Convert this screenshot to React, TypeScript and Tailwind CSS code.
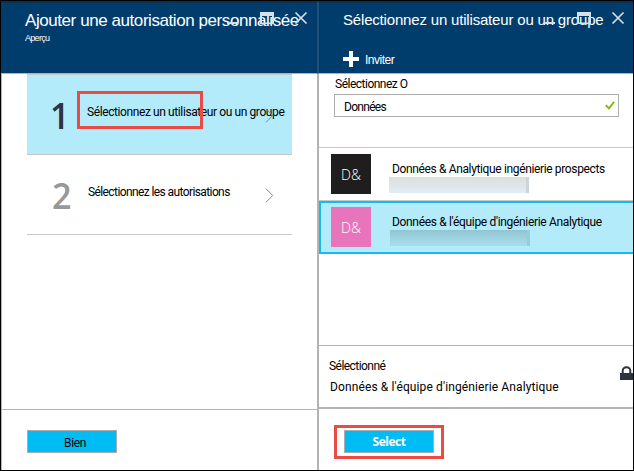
import type { ReactNode } from "react";

function WindowControls({ className }: { className: string }) {
  return (
    <svg className={className} width="83" height="18" viewBox="0 0 83 18" fill="none">
      <path d="M2 14H13" stroke="#d5e0e8" strokeWidth="2" />
      <path d="M35 3H49V15H35Z M37 7V13.5H47V7Z" fill="#d5e0e8" fillRule="evenodd" />
      <path d="M70.500 3.500L81.500 14.500M81.500 3.500L70.500 14.500" stroke="#d5e0e8" strokeWidth="1.7" />
    </svg>
  );
}

function Chevron() {
  return (
    <svg className="mt-[33px] h-[15px] w-[9px] shrink-0" viewBox="0 0 9 15" fill="none">
      <path d="M1 .7L7.700 7.500L1 14.300" stroke="#7d8991" strokeWidth="1" />
    </svg>
  );
}

function Step({ number, active, children }: { number: string; active?: boolean; children: ReactNode }) {
  return (
    <div
      className={`flex w-[265px] border-b border-[#c8c8c8] pl-[25px] ${
        active ? "h-[81px] border-t bg-[#b3ebfb] text-[#2f333b]" : "h-[80px] text-[#96999c]"
      }`}
    >
      <div className={`w-[35px] shrink-0 pt-[16px] font-['Open_Sans',sans-serif] text-[36px] leading-[49px] font-semibold ${active ? "-ml-[2px] mr-[2px]" : ""}`}>
        <span className="inline-block origin-left scale-x-95">{number}</span>
      </div>
      <div className="w-[178px] shrink-0 pt-[29px] leading-4 whitespace-nowrap text-black">{children}</div>
      <Chevron />
    </div>
  );
}

function Group({ name, color, selected, children }: { name: string; color: string; selected?: boolean; children: ReactNode }) {
  return (
    <div className={`flex ${selected ? "h-[53px] border-2 border-r-0 border-[#12bcef] bg-[#b3ebfb] pt-1 pl-[10px]" : "h-[52px] pt-[6px] pl-3"}`}>
      <div
        className={`h-10 w-10 shrink-0 text-center font-['Open_Sans',sans-serif] text-[14px] leading-[42px] font-light text-white ${color}`}
      >
        D&amp;
      </div>
      <div className="ml-[18px]">
        <div className={`h-[23px] pl-[3px] leading-[31px] whitespace-nowrap ${name}`}>{children}</div>
        <div
          className={`h-4 w-[140px] border-r-[3px] ${
            selected
              ? "ml-px border-[#94cedb] bg-linear-to-b from-[#91c5d3] to-[#a9deed]"
              : "border-[#cbd5d8] bg-linear-to-b from-[#dedede] to-[#dfedf4]"
          }`}
        />
      </div>
    </div>
  );
}

export default function App() {
  return (
    <div className="flex h-[471px] w-[634px] overflow-hidden border border-black bg-white font-[Roboto,sans-serif] text-[12px] text-black">
      <section className="flex w-[316px] shrink-0 flex-col">
        <header className="relative h-[73px] shrink-0 border-t-2 border-b border-t-[#073354] border-b-[#a8b5be] bg-[#003d6d] pl-6 font-['Liberation_Sans',sans-serif] text-white">
          <h1 className="pt-[8px] text-[17px] leading-5 tracking-[-0.43px] whitespace-nowrap">Ajouter une autorisation personnalisée</h1>
          <p className="pt-[2px] text-[9px] leading-[10px] tracking-[-0.7px]">Aperçu</p>
          <WindowControls className="absolute top-[6px] left-[224px]" />
        </header>
        <div className="relative h-[335px] shrink-0 border-l border-[#b4b4b4] pl-[25px]">
          <Step number="1" active>
            <span className="tracking-[-0.4px]">Sélectionnez un utilisateur ou un groupe</span>
          </Step>
          <Step number="2">
            <span className="pl-px tracking-[-0.6px]">Sélectionnez les autorisations</span>
          </Step>
          <div className="absolute top-[17px] left-[75px] h-[38px] w-[126px] border-[3px] border-[#eb4b45]" />
        </div>
        <footer className="flex-1 border-t border-l border-[#b4b4b4] pt-[20px] pl-[25px]">
          <button className="block h-[23px] w-[90px] border border-[#a9adaf] bg-[#00bcf5] pt-[2px] pl-[6px] text-center text-[12px] tracking-[-0.4px]">Bien</button>
        </footer>
      </section>

      <section className="flex w-[316px] shrink-0 flex-col">
        <header className="relative h-[73px] shrink-0 border-t-2 border-b border-l-2 border-t-[#073354] border-b-[#a8b5be] border-l-[#1c507a] bg-[#003d6d] pl-6 font-['Liberation_Sans',sans-serif] text-white">
          <h1 className="pt-[7px] text-[15px] leading-5 tracking-[-0.18px] whitespace-nowrap">Sélectionnez un utilisateur ou un groupe</h1>
          <WindowControls className="absolute top-[6px] left-[223px]" />
          <div className="mt-[20px] flex items-center">
            <svg width="16" height="16" viewBox="0 0 16 16">
              <path d="M6 0h4v6h6v4h-6v6H6v-6H0V6h6z" fill="#fff" />
            </svg>
            <span className="pt-[3px] pl-[6px] text-[12px] leading-[14px] tracking-[-0.5px]">Inviter</span>
          </div>
        </header>
        <div className="flex flex-1 flex-col border-l-2 border-[#b4b4b4]">
          <div className="h-[74px] shrink-0 border-b border-[#c8c8c8] pt-[3px] pl-[15px]">
            <label className="block h-[17px] pl-px leading-[15px] tracking-[-0.5px]">Sélectionnez O</label>
            <div className="flex h-[23px] w-[285px] items-center justify-between border border-[#acacac] pr-[3px] pl-[9px]">
              <span className="pt-[2px] tracking-[-0.7px]">Données</span>
              <svg width="10" height="9" viewBox="0 0 10 9" fill="none">
                <path d="M.8 4.300L3.900 7.300L9.200 .9" stroke="#7fba12" strokeWidth="1.9" />
              </svg>
            </div>
          </div>
          <Group name="tracking-[-0.36px]" color="bg-[#1f1d1d]">Données &amp; Analytique ingénierie prospects</Group>
          <div className="border-t border-[#c8c8c8]">
            <Group name="tracking-[-0.33px]" color="bg-[#e874bb]" selected>Données &amp; l'équipe d'ingénierie Analytique</Group>
          </div>
          <div className="mt-[91px] flex h-[64px] shrink-0 justify-between border-t border-b-2 border-[#b4b4b4] pl-[10px]">
            <div className="whitespace-nowrap">
              <div className="pt-[13px] leading-[15px] tracking-[-0.55px]">Sélectionné</div>
              <div className="pt-[6px] pl-px leading-[15px] tracking-[0.12px]">Données &amp; l'équipe d'ingénierie Analytique</div>
            </div>
            <svg className="mt-[20px]" width="13" height="15" viewBox="0 0 13 15" fill="none">
              <path d="M0 7h13v7H0z" fill="#2d3340" />
              <path d="M2.700 8V5a3.800 3.800 0 0 1 7.600 0v3" stroke="#2d3340" strokeWidth="2" />
            </svg>
          </div>
          <footer className="flex-1 pt-4 pl-[15px]">
            <div className="h-[34px] w-[110px] border-[3px] border-[#eb4b45] pt-[2px] pl-[7px]">
              <button className="block h-[23px] w-[90px] border border-[#a9adaf] bg-[#00bcf5] text-center font-['Open_Sans',sans-serif] text-[12px] leading-[22px] font-bold tracking-[-0.5px] text-white">
                Select
              </button>
            </div>
          </footer>
        </div>
      </section>
    </div>
  );
}
